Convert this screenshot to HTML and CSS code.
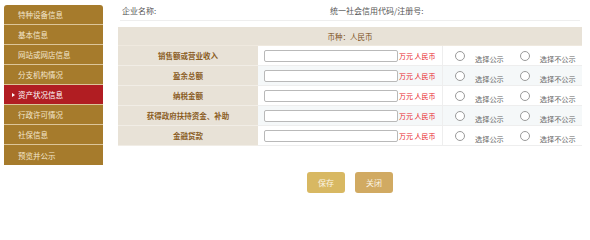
FILE: index.html
```html
<!DOCTYPE html>
<html lang="zh">
<head>
<meta charset="utf-8">
<link rel="stylesheet" href="styles.css">
</head>
<body>
<div class="page">
  <ul class="nav">
    <li class="nav-item">特种设备信息</li>
    <li class="nav-item">基本信息</li>
    <li class="nav-item">网站或网店信息</li>
    <li class="nav-item">分支机构情况</li>
    <li class="nav-item active"><span class="arrow"></span>资产状况信息</li>
    <li class="nav-item">行政许可情况</li>
    <li class="nav-item">社保信息</li>
    <li class="nav-item">预览并公示</li>
  </ul>
  <div class="main">
    <div class="head">
      <span class="head-name">企业名称:</span>
      <span class="head-code">统一社会信用代码/注册号:</span>
    </div>
    <div class="table">
      <div class="row title-row">币种：人民币</div>
      <div class="row">
        <div class="label">销售额或营业收入</div>
        <div class="value"><span class="input"></span><span class="unit">万元 人民币</span></div>
        <div class="choice"><span class="radio"></span><span class="opt">选择公示</span><span class="radio r2"></span><span class="opt">选择不公示</span></div>
      </div>
      <div class="row stripe">
        <div class="label">盈余总额</div>
        <div class="value"><span class="input"></span><span class="unit">万元 人民币</span></div>
        <div class="choice"><span class="radio"></span><span class="opt">选择公示</span><span class="radio r2"></span><span class="opt">选择不公示</span></div>
      </div>
      <div class="row">
        <div class="label">纳税金额</div>
        <div class="value"><span class="input"></span><span class="unit">万元 人民币</span></div>
        <div class="choice"><span class="radio"></span><span class="opt">选择公示</span><span class="radio r2"></span><span class="opt">选择不公示</span></div>
      </div>
      <div class="row stripe">
        <div class="label">获得政府扶持资金、补助</div>
        <div class="value"><span class="input"></span><span class="unit">万元 人民币</span></div>
        <div class="choice"><span class="radio"></span><span class="opt">选择公示</span><span class="radio r2"></span><span class="opt">选择不公示</span></div>
      </div>
      <div class="row">
        <div class="label">金融贷款</div>
        <div class="value"><span class="input"></span><span class="unit">万元 人民币</span></div>
        <div class="choice"><span class="radio"></span><span class="opt">选择公示</span><span class="radio r2"></span><span class="opt">选择不公示</span></div>
      </div>
    </div>
    <div class="buttons">
      <span class="btn save">保存</span>
      <span class="btn close">关闭</span>
    </div>
  </div>
</div>
</body>
</html>
```
FILE: styles.css
```css
html, body {
  margin: 0;
  padding: 0;
  background: #ffffff;
  font-family: "Noto Sans CJK SC", "Noto Sans", sans-serif;
}
.page {
  display: flex;
  align-items: flex-start;
  width: 590px;
  height: 203px;
  overflow: hidden;
}
.nav {
  list-style: none;
  margin: 5px 0 0 4px;
  padding: 0;
  width: 99px;
  border-radius: 3px 3px 0 0;
  overflow: hidden;
  flex: none;
}
.nav-item {
  height: 19px;
  line-height: 19px;
  background: #a67b2c;
  color: #f3e6cc;
  font-size: 7.5px;
  padding-left: 14px;
  border-bottom: 1px solid #dcc59a;
  display: flex;
  align-items: center;
}
.nav-item:last-child {
  border-bottom: none;
  height: 20px;
}
.nav-item.active {
  background: #b11d22;
  color: #ffffff;
  padding-left: 8px;
}
.arrow {
  width: 0;
  height: 0;
  border-left: 3px solid #ffffff;
  border-top: 2.5px solid transparent;
  border-bottom: 2.5px solid transparent;
  margin-right: 3px;
}
.main {
  margin-left: 15px;
  width: 464px;
  flex: none;
}
.head {
  display: flex;
  height: 20px;
  align-items: center;
  border-bottom: 1px solid #eeeeee;
  margin: 0 2px;
  font-size: 8px;
  color: #555555;
}
.head-name {
  margin-left: 2px;
  width: 208px;
}
.table {
  margin-top: 6px;
  font-size: 7.5px;
}
.row {
  display: flex;
  height: 20px;
  border-bottom: 1px solid #eeeeee;
  box-sizing: border-box;
}
.title-row {
  background: #e8e2d7;
  justify-content: center;
  align-items: center;
  color: #7a4f1a;
  height: 19px;
  font-size: 7.5px;
  border-bottom: 1px solid #efe9df;
}
.label {
  width: 140px;
  background: #e8e2d7;
  color: #8a5c1e;
  font-weight: bold;
  display: flex;
  align-items: center;
  justify-content: center;
  border-bottom: 1px solid #f1ede6;
  margin-bottom: -1px;
}
.value {
  width: 185px;
  display: flex;
  align-items: center;
  padding-left: 6px;
  box-sizing: border-box;
  border-right: 1px solid #eeeeee;
}
.stripe .value, .stripe .choice {
  background: #f5f8f9;
}
.input {
  width: 134px;
  height: 12px;
  box-sizing: border-box;
  border: 1px solid #b9b9b9;
  border-radius: 2px;
  background: #ffffff;
}
.unit {
  color: #e8262a;
  font-size: 7px;
  margin-left: 1px;
}
.choice {
  flex: 1;
  display: flex;
  align-items: center;
  padding-left: 12px;
}
.radio {
  width: 10px;
  height: 10px;
  box-sizing: border-box;
  border: 1px solid #9a9a9a;
  border-radius: 50%;
  background: #ffffff;
}
.r2 {
  margin-left: 16px;
}
.opt {
  color: #666666;
  font-size: 7.2px;
  margin-left: 10px;
  padding-top: 7px;
}
.buttons {
  display: flex;
  justify-content: center;
  gap: 10px;
  margin-top: 26px;
}
.btn {
  width: 38px;
  height: 21px;
  border-radius: 3px;
  color: #fbf4e2;
  font-size: 8px;
  display: flex;
  align-items: center;
  justify-content: center;
}
.save {
  background: #d8b862;
}
.close {
  background: #d1aa62;
}
```
